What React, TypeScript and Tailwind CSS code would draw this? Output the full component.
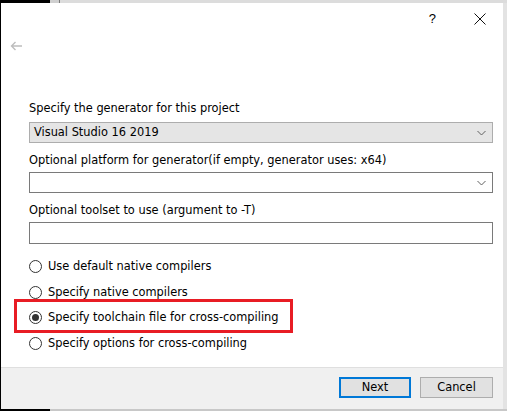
import React from 'react';

const font = { fontFamily: '"DejaVu Sans", "Liberation Sans", sans-serif' };

function Chevron() {
    return (
        <svg width="9" height="6" viewBox="0 0 9 6" className="shrink-0">
            <path d="M0.5 1 L4.5 5 L8.5 1" fill="none" stroke="#606060" strokeWidth="1" />
        </svg>
    );
}

function Radio({ label, checked }: { label: string; checked?: boolean }) {
    return (
        <div className="flex items-center h-[25.5px]">
            <span className="w-[13px] h-[13px] rounded-full border border-[#333] bg-white flex items-center justify-center shrink-0">
                {checked && <span className="w-[7px] h-[7px] rounded-full bg-[#333]" />}
            </span>
            <span className="ml-[6px] leading-none">{label}</span>
        </div>
    );
}

export default function App() {
    return (
        <div className="w-[507px] h-[411px] bg-[#d8d8d8] flex flex-col overflow-hidden text-[11.4px] text-black" style={font}>
            <div className="h-[3px] flex shrink-0">
                <div className="w-[50px] bg-black" />
                <div className="w-[9px] bg-[#cfcfcf]" />
                <div className="w-[1px] bg-[#7a7a7a]" />
                <div className="flex-1 bg-[#dcdcdc]" />
            </div>
            <div className="flex h-[406px] shrink-0">
                <div className="w-[1px] bg-black" />
                <div className="w-[502px] bg-white flex flex-col relative">
                    {/* title bar */}
                    <div className="h-[31px] flex items-center justify-end pr-[17px] shrink-0">
                        <span className="text-[13px] mr-[38px]" style={{ fontFamily: '"Liberation Sans", sans-serif' }}>?</span>
                        <svg width="12" height="12" viewBox="0 0 12 12">
                            <path d="M0.5 0.5 L11.5 11.5 M11.5 0.5 L0.5 11.5" stroke="#111" strokeWidth="1" />
                        </svg>
                    </div>
                    <div className="h-[24px] pl-[9px] flex items-center shrink-0">
                        <svg width="12" height="10" viewBox="0 0 12 10">
                            <path d="M12 5 H1.5 M5.5 1 L1.5 5 L5.5 9" fill="none" stroke="#bdbdbd" strokeWidth="1.4" />
                        </svg>
                    </div>
                    <div className="flex flex-col pl-[28px] pr-[10px] pt-[43px]">
                        <div className="h-[19px] leading-[15px]">Specify the generator for this project</div>
                        <div className="h-[21px] mt-[2px] bg-[#e5e5e5] border border-[#adadad] flex items-center pl-[4px] pr-[6px]">
                            <span className="flex-1">Visual Studio 16 2019</span>
                            <Chevron />
                        </div>
                        <div className="h-[15px] mt-[10px] leading-[15px]">Optional platform for generator(if empty, generator uses: x64)</div>
                        <div className="h-[21px] mt-[4px] bg-white border border-[#7a7a7a] flex items-center justify-end pr-[6px]">
                            <Chevron />
                        </div>
                        <div className="h-[15px] mt-[10px] leading-[15px]">Optional toolset to use (argument to -T)</div>
                        <div className="h-[22px] mt-[4px] bg-white border border-[#7a7a7a]" />
                        <div className="mt-[10px] flex flex-col">
                            <Radio label="Use default native compilers" />
                            <Radio label="Specify native compilers" />
                            <Radio label="Specify toolchain file for cross-compiling" checked />
                            <Radio label="Specify options for cross-compiling" />
                        </div>
                    </div>
                    <div className="absolute left-[13px] top-[296px] w-[279px] h-[34px] border-[3px] border-[#e81c24]" />
                    <div className="mt-auto h-[42px] border-t border-[#dfdfdf] bg-[#f0f0f0] flex items-start justify-end gap-[9px] pt-[9px] pr-[10px] shrink-0">
                        <button className="w-[72px] h-[21px] border-2 border-[#0078d7] bg-[#e1e1e1] leading-none">Next</button>
                        <button className="w-[73px] h-[21px] border border-[#adadad] bg-[#e1e1e1] leading-none">Cancel</button>
                    </div>
                </div>
                <div className="flex-1 bg-[#e3e3e3]" />
            </div>
            <div className="flex flex-1">
                <div className="w-[50px] bg-black" />
                <div className="flex-1 bg-[#c8c8c8]" />
            </div>
        </div>
    );
}
